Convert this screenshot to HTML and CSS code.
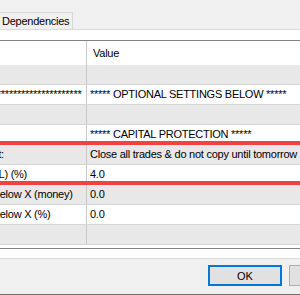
FILE: index.html
```html
<!DOCTYPE html>
<html lang="en">
  <head>
    <meta charset="UTF-8" />
    <meta name="viewport" content="width=device-width, initial-scale=1.0" />
    <title>Expert Properties</title>
    <link rel="stylesheet" href="styles.css">
  </head>

  <body>
    <div class="window">
      <div class="tabs">
        <div class="tab">Dependencies</div>
      </div>

      <div class="panel">
        <div class="list">
          <div class="row head">
            <div class="name"><span>Variable</span></div>
            <div class="value">Value</div>
          </div>
          <div class="row">
            <div class="name"><span></span></div>
            <div class="value"></div>
          </div>
          <div class="row">
            <div class="name"><span>***********************************************</span></div>
            <div class="value">***** OPTIONAL SETTINGS BELOW *****</div>
          </div>
          <div class="row">
            <div class="name"><span></span></div>
            <div class="value"></div>
          </div>
          <div class="row marked">
            <div class="name"><span></span></div>
            <div class="value">***** CAPITAL PROTECTION *****</div>
          </div>
          <div class="row">
            <div class="name"><span>Action on equity limit hit:</span></div>
            <div class="value">Close all trades &amp; do not copy until tomorrow</div>
          </div>
          <div class="row marked">
            <div class="name"><span>Close all if daily loss (PL) (%)</span></div>
            <div class="value">4.0</div>
          </div>
          <div class="row">
            <div class="name"><span>Stop copying if equity below X (money)</span></div>
            <div class="value">0.0</div>
          </div>
          <div class="row">
            <div class="name"><span>Stop copying if equity below X (%)</span></div>
            <div class="value">0.0</div>
          </div>
          <div class="row">
            <div class="name"><span></span></div>
            <div class="value"></div>
          </div>
        </div>
      </div>

      <div class="footer">
        <button class="btn default">OK</button>
        <button class="btn">Cancel</button>
      </div>
    </div>
  </body>
</html>
```

FILE: styles.css
```css
body {
  margin: 0;
  background-color: #f0f0f0;
  font-family: "Liberation Sans", Arial, sans-serif;
  font-size: 11px;
  letter-spacing: -0.25px;
  color: #000;
}

.window {
  width: 300px;
  height: 295px;
  overflow: hidden;
}

.tabs {
  height: 29px;
  box-sizing: border-box;
  padding-top: 12px;
}

.tab {
  width: 74px;
  height: 17px;
  box-sizing: border-box;
  margin-left: -1px;
  padding-left: 2px;
  border: 1px solid #d9d9d9;
  border-bottom: none;
  line-height: 16px;
  white-space: nowrap;
}

.panel {
  background-color: #fff;
  border-top: 1px solid #d9d9d9;
  border-bottom: 1px solid #d9d9d9;
  padding: 10px 0 9px;
}

.list {
  border-top: 1px solid #828282;
  border-bottom: 1px solid #828282;
  padding-bottom: 3px;
}

.row {
  display: flex;
  height: 20px;
  box-sizing: border-box;
  border-bottom: 1px solid #d5d5d5;
  position: relative;
}

.row:nth-child(even) {
  background-color: #e8e8e8;
}

.row.head {
  height: 24px;
  border-bottom: none;
}

.name {
  width: 87px;
  flex: none;
  box-sizing: border-box;
  border-right: 1px solid #c8c8c8;
  overflow: hidden;
  white-space: nowrap;
  line-height: 19px;
}

.name span {
  display: inline-block;
  margin-left: -108px;
}

.head .name span {
  visibility: hidden;
}

.value {
  padding-left: 3px;
  white-space: nowrap;
  line-height: 19px;
}

.head .value {
  padding-left: 6px;
  line-height: 24px;
}

/* red highlight drawn over the row edge */
.row.marked::after {
  content: "";
  position: absolute;
  left: 0;
  right: 0;
  bottom: -1px;
  height: 4px;
  background-color: #f24141;
}

.footer {
  display: flex;
  gap: 7px;
  height: 36px;
  box-sizing: border-box;
  padding: 6px 0 0 208px;
  border-bottom: 1px solid #6e6e6e;
  overflow: hidden;
}

.btn {
  width: 74px;
  height: 21px;
  flex: none;
  padding: 0;
  font: inherit;
  color: #000;
  background-color: #e1e1e1;
  border: 1px solid #adadad;
}

.btn.default {
  border: 2px solid #0078d7;
}
```
